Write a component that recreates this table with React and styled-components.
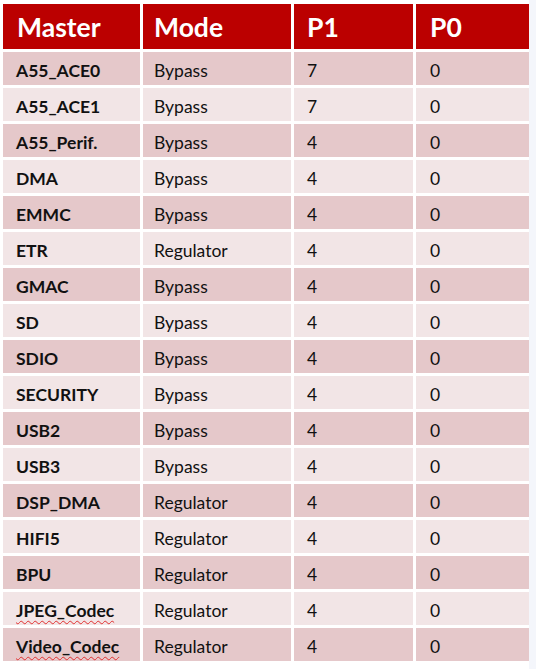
import React from "react";
import styled, { createGlobalStyle } from "styled-components";

const Global = createGlobalStyle`
  html, body { margin: 0; padding: 0; background: #ffffff; }
  body { font-family: Lato, "Open Sans", "Liberation Sans", sans-serif; }
`;

const Page = styled.div`
  padding: 4px 0 0 3px;
  width: 536px;
  height: 669px;
  box-sizing: border-box;
  background: linear-gradient(to right, #ffffff 529px, #f4f6fb 529px);
`;

const Table = styled.div`
  display: flex;
  flex-direction: column;
  gap: 3px;
  width: 526px;
  background: #ffffff;
`;

const Row = styled.div`
  display: grid;
  grid-template-columns: 137px 148px 119px 113px;
  column-gap: 3px;
  height: ${(p) => (p.$head ? "45px" : "33px")};
`;

const HeadCell = styled.div`
  background: #bb0000;
  color: #ffffff;
  font-weight: 700;
  font-size: 26.5px;
  display: flex;
  align-items: center;
  padding-left: ${(p) => p.$pad ?? 13}px;
  padding-top: 1px;
`;

const Cell = styled.div`
  background: ${(p) => (p.$dark ? "#e5c8ca" : "#f2e5e6")};
  color: #111111;
  font-size: 17.5px;
  font-weight: ${(p) => (p.$bold ? 700 : 400)};
  display: flex;
  align-items: center;
  padding-left: ${(p) => p.$pad ?? 13}px;
  padding-top: 4px;
  box-sizing: border-box;
`;

const Squiggle = styled.span`
  text-decoration: underline wavy #e03030;
  text-decoration-thickness: 1px;
  text-underline-offset: 3px;
`;

const rows = [
  ["A55_ACE0", "Bypass", "7", "0"],
  ["A55_ACE1", "Bypass", "7", "0"],
  ["A55_Perif.", "Bypass", "4", "0"],
  ["DMA", "Bypass", "4", "0"],
  ["EMMC", "Bypass", "4", "0"],
  ["ETR", "Regulator", "4", "0"],
  ["GMAC", "Bypass", "4", "0"],
  ["SD", "Bypass", "4", "0"],
  ["SDIO", "Bypass", "4", "0"],
  ["SECURITY", "Bypass", "4", "0"],
  ["USB2", "Bypass", "4", "0"],
  ["USB3", "Bypass", "4", "0"],
  ["DSP_DMA", "Regulator", "4", "0"],
  ["HIFI5", "Regulator", "4", "0"],
  ["BPU", "Regulator", "4", "0"],
  ["JPEG_Codec", "Regulator", "4", "0", true],
  ["Video_Codec", "Regulator", "4", "0", true],
];

export default function App() {
  return (
    <Page>
      <Global />
      <Table>
        <Row $head>
          <HeadCell $pad={14}>Master</HeadCell>
          <HeadCell $pad={11}>Mode</HeadCell>
          <HeadCell>P1</HeadCell>
          <HeadCell $pad={14}>P0</HeadCell>
        </Row>
        {rows.map(([m, mode, p1, p0, sq], i) => {
          const dark = i % 2 === 0;
          return (
            <Row key={m}>
              <Cell $dark={dark} $bold>
                {sq ? <Squiggle>{m}</Squiggle> : m}
              </Cell>
              <Cell $dark={dark} $pad={11}>{mode}</Cell>
              <Cell $dark={dark}>{p1}</Cell>
              <Cell $dark={dark} $pad={14}>{p0}</Cell>
            </Row>
          );
        })}
      </Table>
    </Page>
  );
}
